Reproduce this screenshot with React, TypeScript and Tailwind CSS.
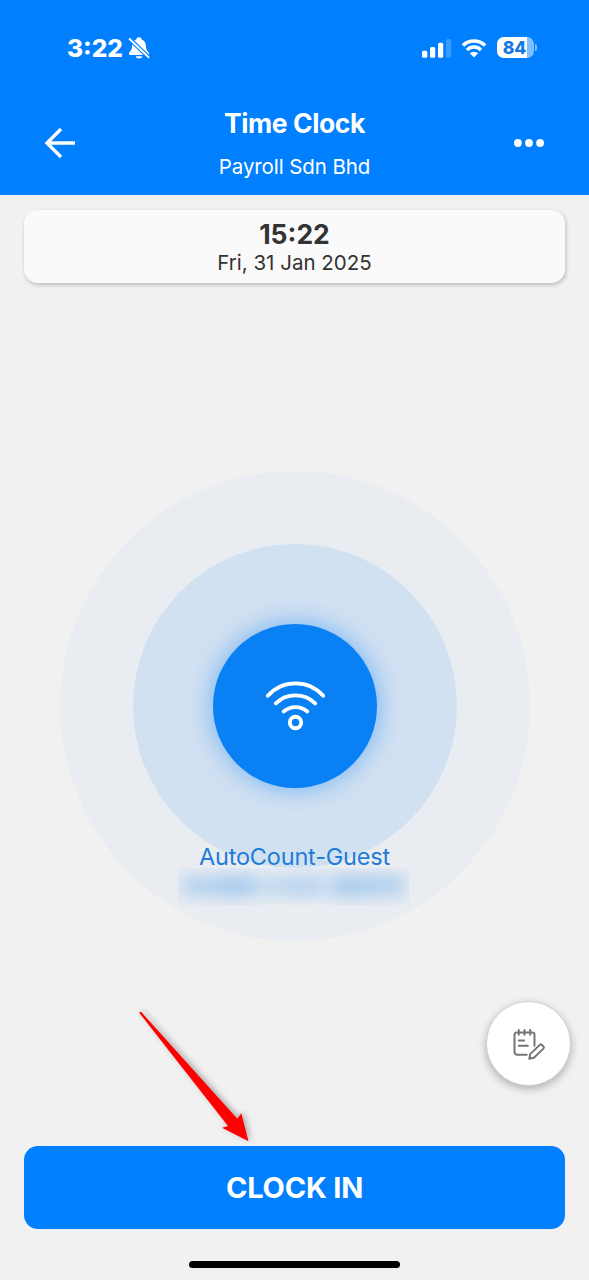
import { type ReactNode } from "react";

function BellOffIcon() {
  return (
    <svg width="22" height="24" viewBox="0 0 22 24" fill="none">
      <path
        d="M11 1.300c-1.500 0-2.500.9-2.700 2.100C5.500 4.400 4.100 6.800 4.100 9.600c0 4-1.200 5.200-2.800 7-.8 1.100-.3 2.400 1 2.400h17.400c1.300 0 1.800-1.300 1-2.400-1.600-1.800-2.800-3-2.800-7 0-2.800-1.400-5.200-4.200-6.200-.2-1.200-1.200-2.100-2.700-2.100Z"
        fill="white"
      />
      <path d="M7.600 20.300h6.800c-.4 1.400-1.700 2.200-3.400 2.200s-3-.8-3.400-2.200Z" fill="white" />
      <path d="M2 3.200 20.600 21.200" stroke="#007fff" strokeWidth="4.200" />
      <path d="M1.600 3 20.600 21.300" stroke="white" strokeWidth="1.900" strokeLinecap="round" />
    </svg>
  );
}

function SignalIcon() {
  return (
    <svg width="30" height="20" viewBox="0 0 30 20" fill="white">
      <rect x="0" y="12.700" width="5.300" height="7" rx="1.500" />
      <rect x="8" y="9" width="5.200" height="10.700" rx="1.500" />
      <rect x="16" y="4.700" width="5.200" height="15" rx="1.500" />
      <rect x="24" y="1" width="5.200" height="18.700" rx="1.500" opacity="0.22" />
    </svg>
  );
}

function StatusWifiIcon() {
  return (
    <svg width="26" height="20" viewBox="0 0 26 20" fill="none">
      <path d="M1.900 7.500a15.800 15.800 0 0 1 22.200 0" stroke="white" strokeWidth="3.600" />
      <path d="M6 11.900a10 10 0 0 1 14 0" stroke="white" strokeWidth="3.500" />
      <path d="M13 19.400 8.900 15.300a5.900 5.900 0 0 1 8.200 0Z" fill="white" />
    </svg>
  );
}

function Battery({ level }: { level: number }) {
  return (
    <div className="flex items-center gap-[1.500px]">
      <div className="relative w-[37px] h-[21px] rounded-[7px] overflow-hidden bg-white/50">
        <div className="h-full bg-white" style={{ width: `${level - 1}%` }} />
        <span className="absolute inset-0 flex items-center justify-center pt-[1px] pr-[1px] text-[17.500px] leading-none font-extrabold text-[#1479e0]">
          {level}
        </span>
      </div>
      <div className="w-[2px] h-[7px] rounded-r-full bg-white/50" />
    </div>
  );
}

function BackIcon() {
  return (
    <svg width="32" height="32" viewBox="0 0 32 32" fill="none" stroke="white" strokeWidth="3.300">
      <path d="M31 16H3M17 2 3 16l14 14" />
    </svg>
  );
}

function MoreIcon() {
  return (
    <svg width="32" height="10" viewBox="0 0 32 10" fill="white">
      <circle cx="4.900" cy="5" r="3.900" />
      <circle cx="16" cy="5" r="3.900" />
      <circle cx="27.100" cy="5" r="3.900" />
    </svg>
  );
}

function WifiIcon() {
  return (
    <svg
      className="translate-x-[0.500px]"
      width="62"
      height="52"
      viewBox="0 0 62 52"
      fill="none"
      stroke="white"
      strokeWidth="3.900"
      strokeLinecap="round"
    >
      <path d="M3.300 15.800a37 37 0 0 1 55.400 0" />
      <path d="M11.300 23.300a28.500 28.500 0 0 1 39.400 0" />
      <path d="M19.200 31.400a18.500 18.500 0 0 1 23.600 0" />
      <circle cx="31" cy="42.500" r="5.700" />
    </svg>
  );
}

function NoteEditIcon() {
  return (
    <svg
      width="34"
      height="34"
      viewBox="0 0 34 34"
      fill="none"
      stroke="#757575"
      strokeWidth="2"
      strokeLinecap="round"
      strokeLinejoin="round"
    >
      <path d="M14.700 27.700H5.500a3 3 0 0 1-3-3V7.500a2 2 0 0 1 2-2h16a2 2 0 0 1 2 2v11.200" />
      <path d="M6.800 3v4.700M12.500 3v4.700M18.200 3v4.700" />
      <path d="M6.800 13.500h5.300M6.800 18.700h9" />
      <path d="m17.300 31.700.9-4.600 9.600-9.200a1.500 1.500 0 0 1 2.100 0l1.500 1.600a1.500 1.500 0 0 1 0 2.100l-9.500 9.200Z" />
    </svg>
  );
}

function Ring({ className, children }: { className: string; children?: ReactNode }) {
  return (
    <div className={`shrink-0 rounded-full flex items-center justify-center ${className}`}>
      {children}
    </div>
  );
}

export default function App() {
  return (
    <div className="relative w-full h-[1280px] flex flex-col overflow-hidden bg-[#f1f1f1] font-['Inter','Liberation_Sans',sans-serif]">
      <header className="h-[195px] shrink-0 bg-[#007fff] text-white">
        {/* Status bar */}
        <div className="h-[95px] pl-[67px] pr-[52px] flex items-center justify-between">
          <div className="flex items-center gap-[5px]">
            <span className="pt-[1px] text-[24.500px] leading-none font-extrabold">3:22</span>
            <BellOffIcon />
          </div>
          <div className="flex items-center">
            <SignalIcon />
            <div className="pl-[9px] pr-[10px]">
              <StatusWifiIcon />
            </div>
            <Battery level={84} />
          </div>
        </div>

        {/* Title bar */}
        <div className="h-24 pl-11 pr-[44px] flex items-center justify-between">
          <BackIcon />
          <div className="pb-[3px] text-center">
            <h1 className="pt-[1px] text-[26.500px] leading-[49px] font-bold tracking-[-0.4px]">Time Clock</h1>
            <p className="text-[20.500px] leading-[38px] tracking-[-0.1px]">Payroll Sdn Bhd</p>
          </div>
          <MoreIcon />
        </div>
      </header>

      {/* Current time */}
      <section className="mt-[15px] mx-6 h-[73px] shrink-0 rounded-[14px] bg-[#fafafa] shadow-[1px_2px_4px_rgba(0,0,0,0.22)] text-center text-[#333]">
        <div className="pt-[9px] text-[26.500px] leading-[31px] font-bold">15:22</div>
        <div className="text-[20.500px] leading-[26px]">Fri, 31 Jan 2025</div>
      </section>

      {/* Connected network */}
      <section className="mt-[188px] flex justify-center">
        <Ring className="relative size-[470px] bg-[#e9edf2]">
          <Ring className="size-[324px] bg-[#d2e1f2]">
            <Ring className="size-[164px] bg-[#0a80f5] shadow-[0_0_26px_rgba(10,128,245,0.5)]">
              <WifiIcon />
            </Ring>
          </Ring>
          <div className="absolute top-[371px] inset-x-0 flex flex-col items-center">
            <span className="text-[23.500px] leading-[30px] tracking-[-0.200px] text-[#1f7cd8]">AutoCount-Guest</span>
            <div className="-mt-[4px] mr-[3px] w-[231px] h-[37px] flex items-center justify-center overflow-hidden bg-[#e6ebf2]">
              <div className="-mt-[2px] flex items-center blur-[8px]">
                <div className="w-[38px] h-[18px] bg-[#afcfee]" />
                <div className="w-[32px] h-[20px] bg-[#a5caed]" />
                <div className="w-[30px] h-[16px] bg-[#bdd7f0]" />
                <div className="w-[38px] h-[18px] bg-[#b5d2ef]" />
                <div className="w-[12px] h-[16px] bg-[#cadef1]" />
                <div className="w-[34px] h-[20px] bg-[#a6caed]" />
                <div className="w-[36px] h-[19px] bg-[#acceee]" />
              </div>
            </div>
          </div>
        </Ring>
      </section>

      <div className="mt-[60px] pr-[18px] flex justify-end">
        <button className="size-[85px] rounded-full flex items-center justify-center bg-white border border-[#d2d2d2] shadow-[0_3px_8px_rgba(0,0,0,0.28)]">
          <NoteEditIcon />
        </button>
      </div>

      <button className="mt-[60px] mx-6 h-[83px] pt-[1px] shrink-0 rounded-[14px] bg-[#007fff] text-white text-[29px] font-bold tracking-[-0.2px]">
        CLOCK IN
      </button>

      {/* Home indicator */}
      <div className="mt-[32px] mx-auto w-[211px] h-[7px] shrink-0 rounded-full bg-black" />

      {/* Pointer to the clock in button */}
      <svg
        className="absolute left-[120px] top-[990px] drop-shadow-[2px_-1px_3px_rgba(0,0,0,0.3)]"
        width="160"
        height="160"
        viewBox="0 0 160 160"
      >
        <path d="M19 22.500 21 21.700 117.300 128.700 121.300 123.300 128.500 151.200 102 137.700 108 136Z" fill="#f00" />
      </svg>
    </div>
  );
}
